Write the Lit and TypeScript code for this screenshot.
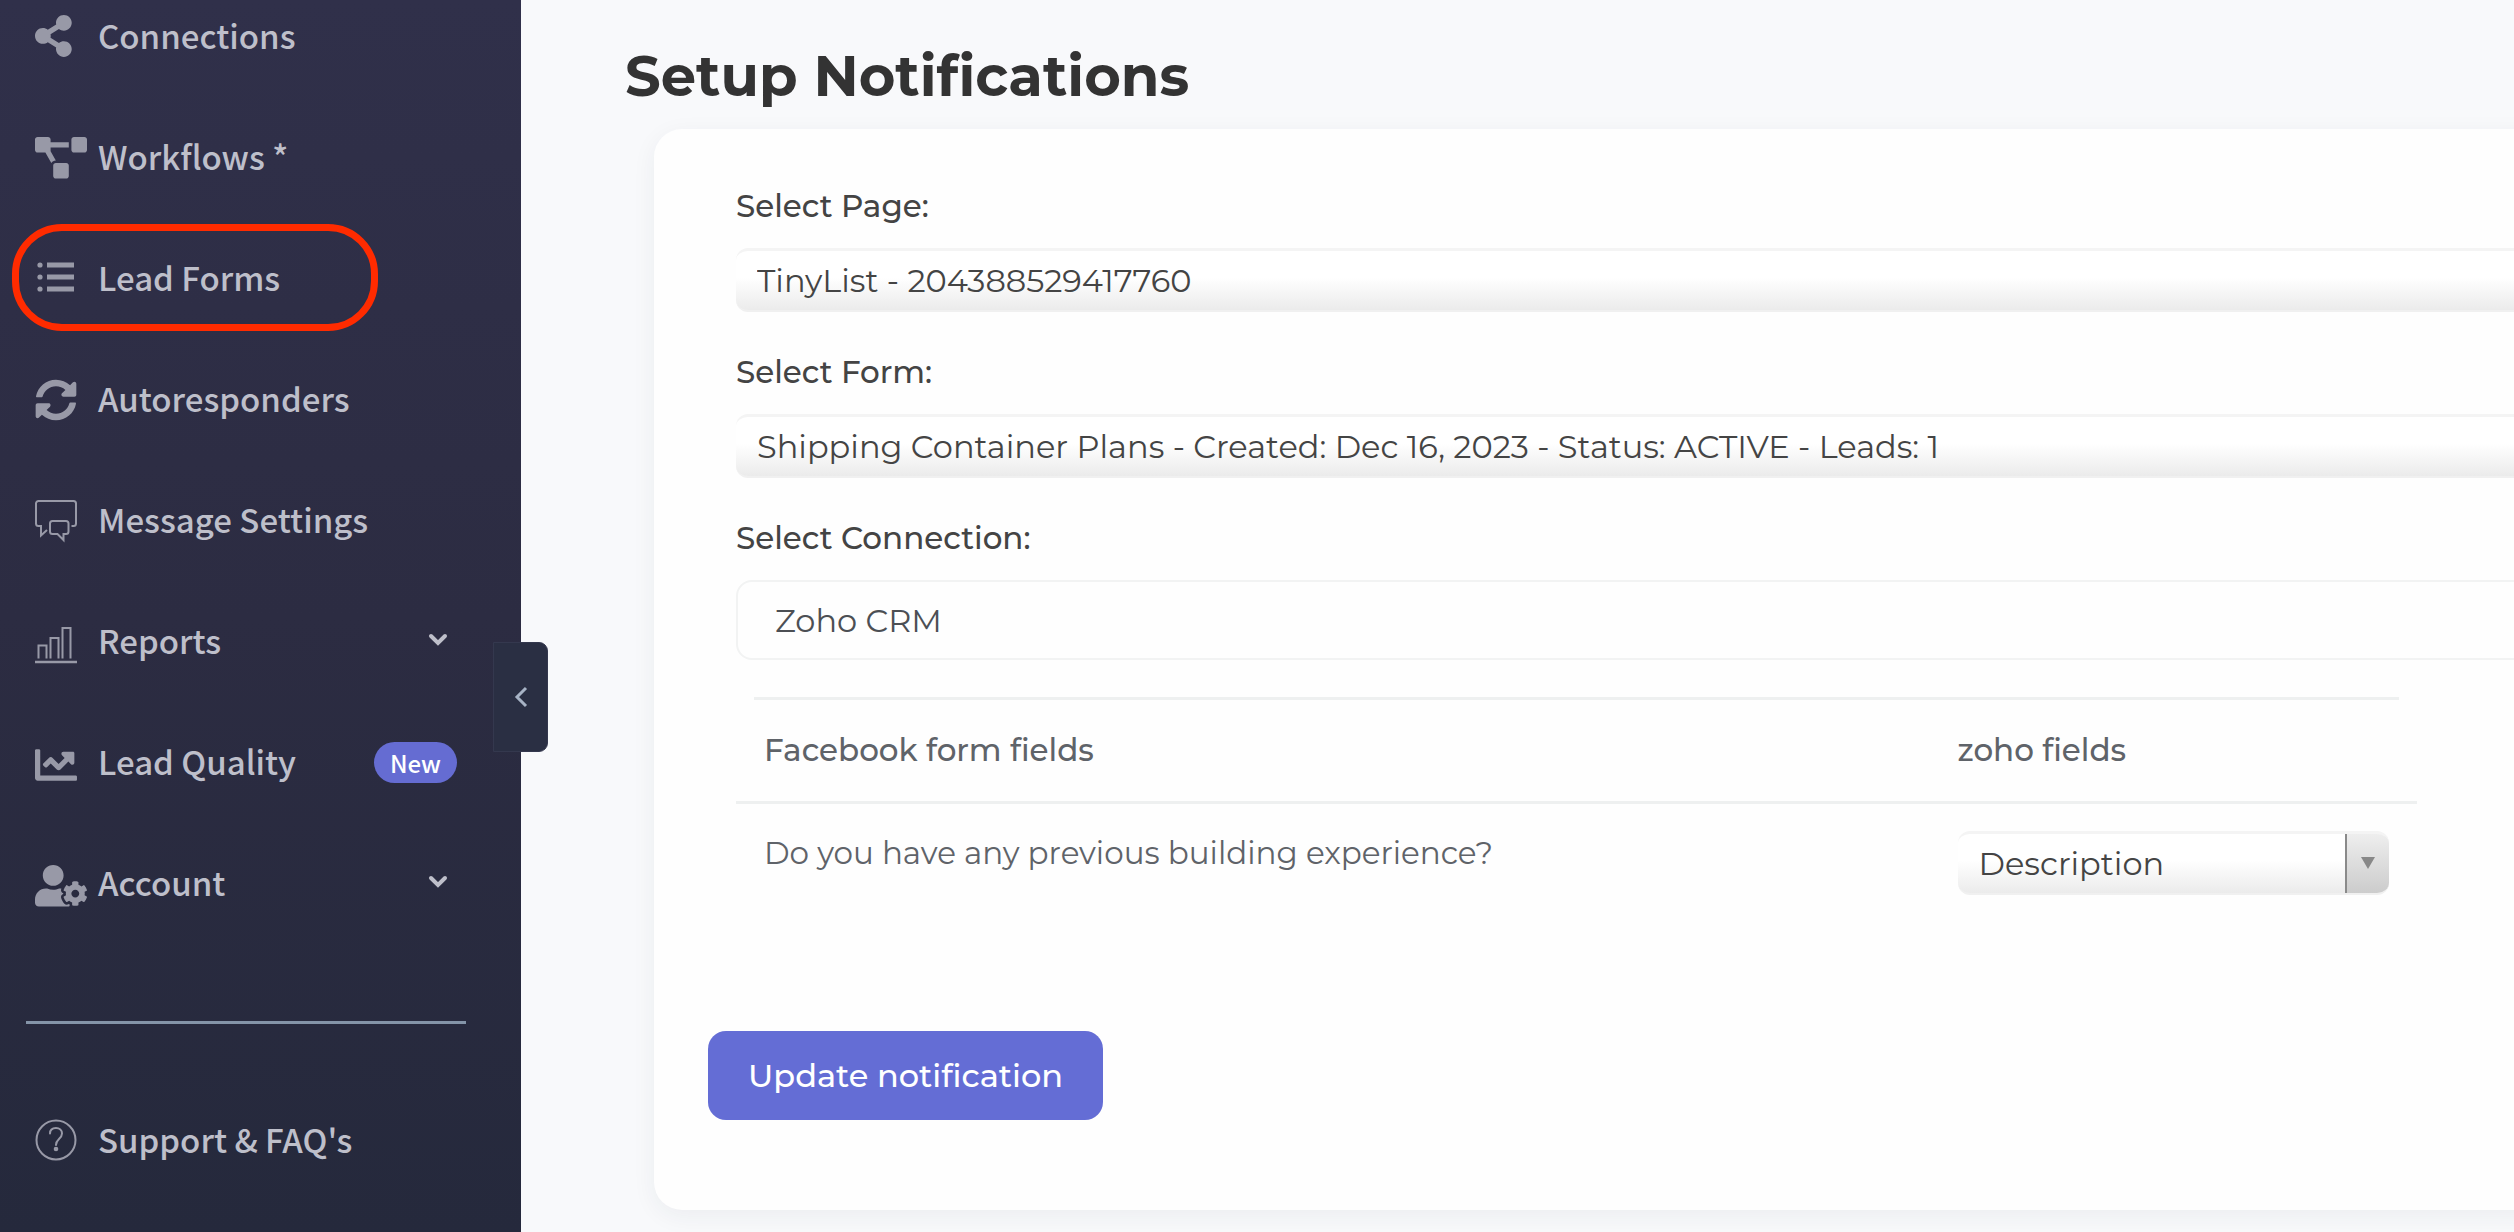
import { LitElement, html, css, svg, nothing } from "lit";
import { customElement } from "lit/decorators.js";

type NavItem = {
  label: string;
  icon: keyof typeof icons;
  expandable?: boolean;
  badge?: string;
  circled?: boolean;
};

const icons = {
  share: svg`<g transform="translate(0 3) scale(.082)"><path d="M352 320c-22.608 0-43.387 7.819-59.79 20.895l-102.486-64.054a96.551 96.551 0 0 0 0-41.683l102.486-64.054C308.613 184.181 329.392 192 352 192c53.019 0 96-42.981 96-96S405.019 0 352 0s-96 42.981-96 96c0 7.158.79 14.13 2.276 20.841L155.79 180.895C139.387 167.819 118.608 160 96 160c-53.019 0-96 42.981-96 96s42.981 96 96 96c22.608 0 43.387-7.819 59.79-20.895l102.486 64.054A96.301 96.301 0 0 0 256 416c0 53.019 42.981 96 96 96s96-42.981 96-96-42.981-96-96-96z"/></g>`,
  diagram: svg`<g transform="translate(0 4) scale(.08125)"><path d="M384 320H256c-17.67 0-32 14.33-32 32v128c0 17.67 14.33 32 32 32h128c17.67 0 32-14.33 32-32V352c0-17.67-14.33-32-32-32zM192 32c0-17.67-14.33-32-32-32H32C14.33 0 0 14.33 0 32v128c0 17.67 14.33 32 32 32h95.72l73.16 128.04C211.98 300.98 232.4 288 256 288h.28L192 175.51V128h224V64H192V32zM608 0H480c-17.67 0-32 14.33-32 32v128c0 17.67 14.33 32 32 32h128c17.67 0 32-14.33 32-32V32c0-17.67-14.33-32-32-32z"/></g>`,
  list: svg`<circle cx="5" cy="11" r="2.6"/><circle cx="5" cy="23" r="2.6"/><circle cx="5" cy="35" r="2.6"/><path d="M12 8.5h27v5H12zM12 20.5h27v5H12zM12 32.5h27v5H12z"/>`,
  sync: svg`<g transform="translate(0 4) scale(.082)"><path d="M370.72 133.28C339.458 104.008 298.888 87.962 255.848 88c-77.458.068-144.328 53.178-162.791 126.85-1.344 5.363-6.122 9.15-11.651 9.15H24.103c-7.498 0-13.194-6.807-11.807-14.176C33.933 94.924 134.813 8 256 8c66.448 0 126.791 26.136 171.315 68.685L463.03 40.97C478.149 25.851 504 36.559 504 57.941V192c0 13.255-10.745 24-24 24H345.941c-21.382 0-32.09-25.851-16.971-40.971l41.75-41.749zM32 296h134.059c21.382 0 32.09 25.851 16.971 40.971l-41.75 41.75c31.262 29.273 71.835 45.319 114.876 45.28 77.418-.07 144.315-53.144 162.787-126.849 1.344-5.363 6.122-9.15 11.651-9.15h57.304c7.498 0 13.194 6.807 11.807 14.176C478.067 417.076 377.187 504 256 504c-66.448 0-126.791-26.136-171.315-68.685L48.97 471.03C33.851 486.149 8 475.441 8 454.059V320c0-13.255 10.745-24 24-24z"/></g>`,
  chat: svg`<g fill="none" stroke="currentColor" stroke-width="2" stroke-linejoin="miter"><path d="M12 34l-6 5.500v-9.500h-2.500a2.500 2.500 0 0 1-2.500-2.500v-20a2.500 2.500 0 0 1 2.500-2.500h35a2.500 2.500 0 0 1 2.500 2.500v20a2.500 2.500 0 0 1-2.500 2.500h-2"/><path d="M17.500 25h13.500a2.500 2.500 0 0 1 2.500 2.500v8a2.500 2.500 0 0 1-2.500 2.500h-2.500v6l-6-6h-5a2.500 2.500 0 0 1-2.500-2.500v-8a2.500 2.500 0 0 1 2.500-2.500z"/></g>`,
  bars: svg`<g fill="none" stroke="currentColor" stroke-width="2"><path d="M3.500 41.500V28.500h8V41.500M15.500 41.500V21h8V41.500M27.500 41.500V11h8V41.500"/><path d="M0 45h42" stroke-width="2.500"/></g>`,
  chart: svg`<g transform="translate(0 6) scale(.082)"><path d="M496 384H64V80c0-8.840-7.160-16-16-16H16C7.160 64 0 71.160 0 80v336c0 17.670 14.330 32 32 32h464c8.840 0 16-7.160 16-16v-32c0-8.840-7.160-16-16-16zM464 96H345.940c-21.380 0-32.090 25.850-16.970 40.970l32.400 32.400L288 242.750l-73.370-73.370c-12.500-12.500-32.760-12.500-45.250 0l-68.690 68.690c-6.250 6.250-6.250 16.380 0 22.630l22.620 22.620c6.250 6.250 16.380 6.250 22.630 0L192 237.250l73.370 73.370c12.500 12.500 32.760 12.500 45.250 0l96-96 32.400 32.400c15.120 15.120 40.970 4.410 40.970-16.970V112c.01-8.840-7.150-16-15.990-16z"/></g>`,
  userCog: svg`<g transform="translate(0 6) scale(.08125)"><path d="M610.5 373.3c2.6-14.1 2.6-28.5 0-42.6l25.8-14.9c3-1.7 4.3-5.2 3.3-8.5-6.7-21.6-18.2-41.2-33.2-57.4-2.3-2.5-6-3.1-9-1.4l-25.8 14.9c-10.9-9.3-23.4-16.5-36.9-21.3v-29.8c0-3.4-2.4-6.4-5.7-7.1-22.3-5-45-4.8-66.2 0-3.3.7-5.7 3.7-5.7 7.1v29.8c-13.5 4.8-26 12-36.9 21.3l-25.800-14.900c-2.900-1.700-6.700-1.100-9 1.400-15 16.200-26.500 35.800-33.200 57.400-1 3.300.4 6.800 3.300 8.500l25.800 14.900c-2.600 14.100-2.600 28.500 0 42.600l-25.800 14.900c-3 1.700-4.300 5.200-3.300 8.500 6.700 21.600 18.200 41.100 33.200 57.400 2.300 2.500 6 3.100 9 1.400l25.800-14.900c10.900 9.300 23.400 16.500 36.900 21.300v29.800c0 3.400 2.400 6.400 5.700 7.100 22.300 5 45 4.800 66.200 0 3.300-.7 5.700-3.700 5.700-7.100v-29.800c13.500-4.800 26-12 36.900-21.300l25.800 14.900c2.900 1.700 6.700 1.100 9-1.400 15-16.200 26.500-35.800 33.200-57.400 1-3.300-.4-6.800-3.300-8.500l-25.800-14.900zM496 400.5c-26.800 0-48.500-21.800-48.500-48.500s21.800-48.500 48.500-48.500 48.500 21.800 48.500 48.500-21.700 48.500-48.500 48.500zM224 256c70.700 0 128-57.300 128-128S294.700 0 224 0 96 57.300 96 128s57.300 128 128 128zm201.200 226.500c-2.300-1.200-4.600-2.600-6.800-3.900l-7.900 4.600c-6 3.400-12.800 5.300-19.600 5.300-10.900 0-21.400-4.600-28.900-12.600-18.300-19.800-32.300-43.900-40.200-69.600-5.500-17.700 1.900-36.400 17.900-45.700l7.900-4.600c-.1-2.600-.1-5.200 0-7.800l-7.900-4.600c-16-9.200-23.400-28-17.900-45.700.9-2.900 2.200-5.800 3.200-8.700-3.800-.3-7.500-1.200-11.400-1.200h-16.700c-22.200 10.200-46.900 16-72.900 16s-50.600-5.800-72.900-16h-16.700C60.200 288 0 348.200 0 422.400V464c0 26.500 21.500 48 48 48h352c10.100 0 19.500-3.200 27.200-8.500-1.200-3.800-2-7.700-2-11.800v-9.200z"/></g>`,
  help: svg`<g fill="none" stroke="currentColor" stroke-width="2"><circle cx="21" cy="24" r="19.500"/><path d="M15 17.500c0-3.500 2.500-5.500 6-5.500s6 2.200 6 5.500c0 2.600-1.300 3.900-3 5.500-1.900 1.800-3 3-3 6" stroke-linecap="round"/></g><circle cx="21" cy="33" r="2.300"/>`,
};

const mainNav: NavItem[] = [
  { label: "Connections", icon: "share" },
  { label: "Workflows *", icon: "diagram" },
  { label: "Lead Forms", icon: "list", circled: true },
  { label: "Autoresponders", icon: "sync" },
  { label: "Message Settings", icon: "chat" },
  { label: "Reports", icon: "bars", expandable: true },
  { label: "Lead Quality", icon: "chart", badge: "New" },
  { label: "Account", icon: "userCog", expandable: true },
];

@customElement("app-sidebar")
export class AppSidebar extends LitElement {
  static styles = css`
    :host {
      display: block;
      position: relative;
      z-index: 1;
      box-sizing: border-box;
      color: #bebfca;
      background: linear-gradient(#30304a, #2c2c42 50%, #25293c);
      font-family: "Noto Sans CJK JP", "Noto Sans", sans-serif;
      font-size: 33px;
      font-weight: 500;
      line-height: 48px;
    }
    .list {
      display: flex;
      flex-direction: column;
      gap: 49px;
      margin: 0;
      padding: 0;
      list-style: none;
    }
    .item {
      position: relative;
    }
    .circled::after {
      content: "";
      position: absolute;
      inset: -18px auto -17px 12px;
      width: 366px;
      box-sizing: border-box;
      border: 7px solid #ff2b00;
      border-radius: 50px;
      pointer-events: none;
    }
    .row {
      display: flex;
      align-items: center;
      width: 100%;
      height: 72px;
      box-sizing: border-box;
      padding: 0 64px 0 35px;
      border: 0;
      background: none;
      color: inherit;
      font: inherit;
      text-align: left;
      text-decoration: none;
      cursor: pointer;
    }
    .icon {
      flex: none;
      width: 52px;
      height: 48px;
      margin-right: 11px;
      fill: currentColor;
      color: #9899a7;
      overflow: visible;
    }
    .label {
      flex: 1;
      padding-bottom: 2px;
      white-space: nowrap;
    }
    .chevron {
      width: 20px;
      height: 14px;
      margin: 0 9px 2px 0;
      fill: none;
      stroke: currentColor;
      stroke-width: 4;
      stroke-linecap: round;
    }
    .badge {
      padding: 0 16px;
      border-radius: 21px;
      background: #656cd2;
      color: #fff;
      font-size: 24px;
      line-height: 41px;
    }
    .rule {
      height: 3px;
      margin: 102px 55px 80px 26px;
      border: 0;
      background: #8494a8;
    }
    .collapse {
      position: absolute;
      top: 642px;
      right: -27px;
      display: grid;
      place-items: center;
      width: 55px;
      height: 110px;
      padding: 0;
      border: 1px solid #34384e;
      border-radius: 0 9px 9px 0;
      background: #2a2f43;
      color: #a7b3c5;
      cursor: pointer;
    }
    .collapse-icon {
      width: 14px;
      height: 22px;
      fill: none;
      stroke: currentColor;
      stroke-width: 3;
    }
  `;

  private renderItem(item: NavItem) {
    const content = html`
      <svg class="icon" viewBox="0 0 52 48" aria-hidden="true">${icons[item.icon]}</svg>
      <span class="label">${item.label}</span>
      ${item.badge ? html`<span class="badge">${item.badge}</span>` : nothing}
      ${item.expandable
        ? html`<svg class="chevron" viewBox="0 0 20 14" aria-hidden="true"><path d="M3 3l7 7 7-7" /></svg>`
        : nothing}
    `;
    return html`<li class="item ${item.circled ? "circled" : ""}">
      ${item.expandable
        ? html`<button class="row" type="button" aria-expanded="false">${content}</button>`
        : html`<a class="row" href="#">${content}</a>`}
    </li>`;
  }

  render() {
    return html`
      <nav>
        <ul class="list">${mainNav.map((item) => this.renderItem(item))}</ul>
        <hr class="rule" />
        <ul class="list">${this.renderItem({ label: "Support & FAQ's", icon: "help" })}</ul>
      </nav>
      <button class="collapse" type="button" aria-label="Collapse menu">
        <svg class="collapse-icon" viewBox="0 0 14 22" aria-hidden="true"><path d="M12 2L3 11l9 9" /></svg>
      </button>
    `;
  }
}

@customElement("notification-form")
export class NotificationForm extends LitElement {
  static styles = css`
    :host {
      display: block;
      box-sizing: border-box;
      padding: 58px 82px 90px 54px;
      border-radius: 28px;
      background: #fefefe;
      box-shadow: 0 6px 24px rgba(40, 50, 60, 0.06);
      color: #444;
      font-size: 31px;
      line-height: 38px;
    }
    .fields {
      display: flex;
      flex-direction: column;
      gap: 41px;
      padding-left: 28px;
    }
    .field {
      display: flex;
      flex-direction: column;
      gap: 23px;
    }
    .caption {
      font-weight: 500;
    }
    .select {
      appearance: none;
      width: 100%;
      height: 64px;
      box-sizing: border-box;
      margin: 0;
      padding: 0 21px;
      border: 0;
      border-top: 3px solid #f4f4f4;
      border-bottom: 2px solid #f0f0f0;
      border-radius: 12px;
      background: linear-gradient(#fff 45%, #ebebeb);
      color: #444;
      font: inherit;
      font-size: 32px;
      cursor: pointer;
    }
    .input {
      width: 100%;
      height: 80px;
      box-sizing: border-box;
      margin: 0;
      padding: 0 37px;
      border: 2px solid #f2f3f3;
      border-radius: 16px;
      background: #fefefe;
      color: #4c4f54;
      font: inherit;
      font-size: 32px;
    }
    .table {
      width: calc(100% - 163px);
      margin: 37px 0 0 28px;
      padding-top: 3px;
      border-collapse: separate;
      border-spacing: 0;
      background: linear-gradient(#eef0f0, #eef0f0) top center / calc(100% - 36px) 3px no-repeat;
      table-layout: fixed;
      color: #5f6369;
      text-align: left;
    }
    .question-col {
      width: 71%;
    }
    .head {
      height: 104px;
      box-sizing: border-box;
      padding: 0 28px 2px;
      border-bottom: 3px solid #eef0f0;
      font-weight: 500;
    }
    .cell {
      padding: 27px 28px;
      line-height: 44px;
      vertical-align: top;
    }
    .mapping {
      display: block;
      padding-right: 63px;
      background:
        linear-gradient(#8a8a8a, #8a8a8a) right 42px top / 2px 100% no-repeat,
        linear-gradient(#eee, #ccc) right / 42px 100% no-repeat,
        linear-gradient(#fff 45%, #ebebeb);
    }
    .mapping-wrap {
      position: relative;
    }
    .arrow {
      position: absolute;
      top: 26px;
      right: 14px;
      width: 14px;
      height: 12px;
      fill: #888;
      pointer-events: none;
    }
    .submit {
      height: 89px;
      margin-top: 109px;
      padding: 0 40px;
      border: 0;
      border-radius: 18px;
      background: #646dd5;
      color: #fff;
      font: inherit;
      font-size: 32px;
      font-weight: 500;
      font-variant-ligatures: none;
      cursor: pointer;
    }
  `;

  render() {
    return html`
      <form>
        <div class="fields">
          <div class="field">
            <label class="caption" for="page">Select Page:</label>
            <select class="select" id="page">
              <option>TinyList - 204388529417760</option>
            </select>
          </div>
          <div class="field">
            <label class="caption" for="form">Select Form:</label>
            <select class="select" id="form">
              <option>Shipping Container Plans - Created: Dec 16, 2023 - Status: ACTIVE - Leads: 1</option>
            </select>
          </div>
          <div class="field">
            <label class="caption" for="connection">Select Connection:</label>
            <input class="input" id="connection" type="text" value="Zoho CRM" />
          </div>
        </div>
        <table class="table">
          <thead>
            <tr>
              <th class="head question-col" scope="col">Facebook form fields</th>
              <th class="head" scope="col">zoho fields</th>
            </tr>
          </thead>
          <tbody>
            <tr>
              <td class="cell">
                <label for="mapping">Do you have any previous building experience?</label>
              </td>
              <td class="cell">
                <div class="mapping-wrap">
                  <select class="select mapping" id="mapping">
                    <option>Description</option>
                  </select>
                  <svg class="arrow" viewBox="0 0 14 12" aria-hidden="true"><path d="M0 0h14L7 12z" /></svg>
                </div>
              </td>
            </tr>
          </tbody>
        </table>
        <button class="submit" type="button">Update notification</button>
      </form>
    `;
  }
}

@customElement("app-root")
export class AppRoot extends LitElement {
  static styles = css`
    :host {
      display: grid;
      grid-template-columns: 521px minmax(0, 1fr);
      min-height: 100vh;
      overflow: hidden;
      background: #f8f9fb;
      font-family: Montserrat, Inter, "Liberation Sans", sans-serif;
      font-variant-ligatures: none;
    }
    .main {
      padding: 44px 0 23px 104px;
    }
    .title {
      margin: 0 0 21px;
      color: #333;
      font-size: 56px;
      font-weight: 700;
      line-height: 64px;
    }
    .card {
      margin: 0 -120px 0 29px;
    }
  `;

  render() {
    return html`
      <app-sidebar></app-sidebar>
      <main class="main">
        <h1 class="title">Setup Notifications</h1>
        <notification-form class="card"></notification-form>
      </main>
    `;
  }
}
